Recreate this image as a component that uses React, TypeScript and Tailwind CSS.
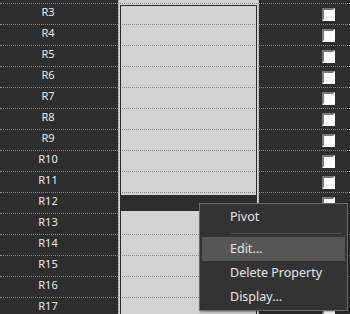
const ROWS = ["R3", "R4", "R5", "R6", "R7", "R8", "R9", "R10", "R11", "R12", "R13", "R14", "R15", "R16", "R17"];

const MENU = [
  { label: "Pivot", active: false },
  { label: "sep", active: false },
  { label: "Edit...", active: true },
  { label: "Delete Property", active: false },
  { label: "Display...", active: false },
];

function Checkbox() {
  return (
    <span className="block h-[13px] w-[13px] border-2 border-t-[#7a7a7a] border-l-[#7a7a7a] border-r-white border-b-white bg-white" />
  );
}

function Row({ label }: { label: string }) {
  // R12 is the row being edited: its value cell turns dark and hides the next line
  const editing = label === "R12";
  const afterEdit = label === "R13";
  return (
    <div className="flex h-[21px]">
      <div className="w-[118px] border-t border-dotted border-[#8a8a8a] pr-[22px] pt-[1px] text-center text-[11px] leading-[14px] text-[#ececec]">
        {label}
      </div>
      <div
        className={
          "w-[141px] border-x border-t border-dotted border-x-[#9a9a9a] bg-[#d2d2d2] " +
          (afterEdit ? "border-t-transparent" : "border-t-[#8a8a8a]")
        }
      >
        {editing && <div className="mx-[2px] mt-[2px] h-[16px] bg-[#2d2d2d]" />}
      </div>
      <div className="flex flex-1 items-center border-t border-dotted border-[#8a8a8a] pl-[63px]">
        <Checkbox />
      </div>
    </div>
  );
}

export default function App() {
  return (
    <div className="relative h-[314px] w-[350px] overflow-hidden bg-[#2d2d2d] font-['Noto_Sans',sans-serif]">
      <div className="flex h-[3px]">
        <div className="w-[118px]" />
        <div className="w-[141px] border-x border-dotted border-[#9a9a9a] bg-[#d2d2d2]" />
      </div>
      {ROWS.map((r) => (
        <Row key={r} label={r} />
      ))}

      {/* selection frame around the value column */}
      <div className="pointer-events-none absolute left-[120px] top-[5px] h-[330px] w-[137px] border border-[#2b2b2b]" />

      {/* context menu */}
      <div className="absolute left-[199px] top-[203px] w-[149px] border border-[#6c6c6c] bg-[#333333] px-[2px] pb-[1px] pt-[1px] text-[12.5px] text-[#e6e6e6] shadow-[1px_1px_2px_rgba(0,0,0,0.4)]">
        {MENU.map((m) =>
          m.label === "sep" ? (
            <div key="sep" className="ml-[29px] mr-[3px] mb-[3px] mt-[4px] h-px bg-[#505050]" />
          ) : (
            <div
              key={m.label}
              className={"flex h-[24px] items-center pl-[28px] " + (m.active ? "bg-[#565656]" : "")}
            >
              {m.label}
            </div>
          ),
        )}
      </div>
    </div>
  );
}
